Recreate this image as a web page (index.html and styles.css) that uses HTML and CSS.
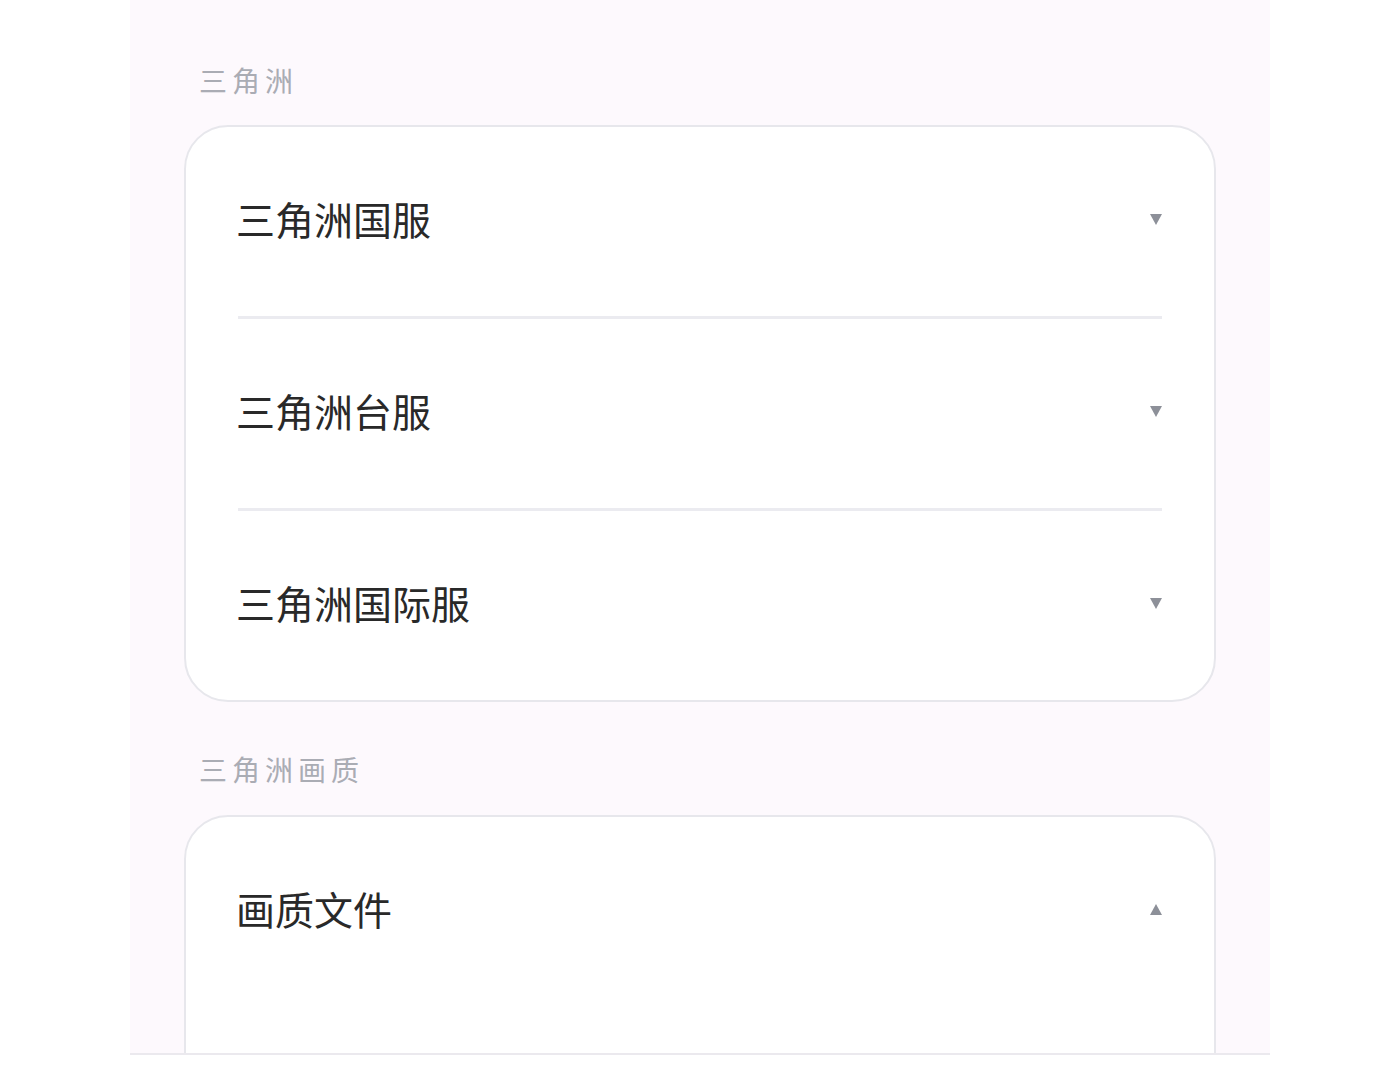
FILE: index.html
```html
<!DOCTYPE html>
<html lang="zh-CN">
<head>
<meta charset="utf-8">
<title>设置</title>
<link rel="stylesheet" href="styles.css">
</head>
<body>
<div class="panel">
  <div class="section-label">三角洲</div>
  <div class="card">
    <div class="row">
      <span class="row-title">三角洲国服</span>
      <span class="caret caret-down"></span>
    </div>
    <div class="sep"></div>
    <div class="row">
      <span class="row-title">三角洲台服</span>
      <span class="caret caret-down"></span>
    </div>
    <div class="sep"></div>
    <div class="row">
      <span class="row-title">三角洲国际服</span>
      <span class="caret caret-down"></span>
    </div>
  </div>

  <div class="section-label section-label-2">三角洲画质</div>
  <div class="card card-open">
    <div class="row">
      <span class="row-title">画质文件</span>
      <span class="caret caret-up"></span>
    </div>
    <div class="expanded"></div>
  </div>
</div>
</body>
</html>
```
FILE: styles.css
```css
html, body {
  margin: 0;
  padding: 0;
  background: #ffffff;
}

body {
  font-family: "Noto Sans CJK SC", "Noto Sans", sans-serif;
}

.panel {
  margin-left: 130px;
  width: 1140px;
  height: 1055px;
  box-sizing: border-box;
  padding: 60px 54px 0 54px;
  background: #fdf9fd;
  border-bottom: 2px solid #ebe9ee;
  overflow: hidden;
}

.section-label {
  font-size: 28px;
  line-height: 40px;
  letter-spacing: 5px;
  color: #aaacb4;
  padding-left: 15px;
  margin-bottom: 25px;
}

.section-label-2 {
  margin-top: 47px;
  margin-bottom: 26px;
}

.card {
  background: #ffffff;
  border: 2px solid #e7e7ec;
  border-radius: 44px;
  padding: 0 52px;
}

.card-open {
  border-bottom-left-radius: 0;
  border-bottom-right-radius: 0;
}

.row {
  height: 189px;
  box-sizing: border-box;
  padding-bottom: 8px;
  display: flex;
  align-items: center;
  justify-content: space-between;
}

.row-title {
  font-size: 39px;
  line-height: 50px;
  color: #292929;
  margin-left: -2px;
}

.sep {
  height: 3px;
  background: #ebebf0;
}

.caret {
  width: 0;
  height: 0;
  margin-top: 4px;
}

.caret-down {
  border-left: 6.5px solid transparent;
  border-right: 6.5px solid transparent;
  border-top: 11px solid #8d9099;
}

.caret-up {
  border-left: 6.5px solid transparent;
  border-right: 6.5px solid transparent;
  border-bottom: 11px solid #8d9099;
}

.expanded {
  height: 200px;
}
```
